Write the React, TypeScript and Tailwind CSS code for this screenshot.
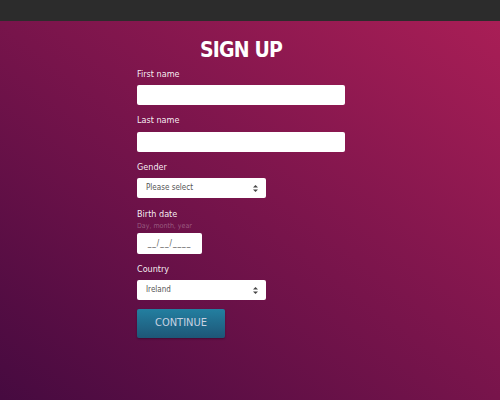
const font = "font-['DejaVu_Sans_Condensed','DejaVu_Sans',sans-serif]";

function Label({ children }: { children: string }) {
  return <div className="text-[9px] leading-[12px] text-white/95">{children}</div>;
}

function TextInput() {
  return <input type="text" className="block h-[20px] w-[208px] rounded-[2px] bg-white outline-none" />;
}

function FakeSelect({ value }: { value: string }) {
  return (
    <div className="flex h-[20px] w-[129px] items-center justify-between rounded-[2px] bg-white pl-[9px] pr-[8px] text-[8px] text-[#555]">
      <span>{value}</span>
      <svg width="5" height="7" viewBox="0 0 5 7" className="fill-[#444]">
        <path d="M2.5 0 L5 2.6 H0 Z" />
        <path d="M2.5 7 L5 4.4 H0 Z" />
      </svg>
    </div>
  );
}

export default function App() {
  return (
    <div className={`h-[400px] w-[500px] overflow-hidden ${font}`}>
      <div className="h-[21px] bg-[#2c2c2c]" />
      <div className="h-[379px] bg-[linear-gradient(to_top_right,#460a40,#a91e56)] pt-[18px]">
        <form className="ml-[137px] w-[208px]">
          <h1 className="text-center text-[21px] font-bold leading-[22px] tracking-[-0.8px] text-white">SIGN UP</h1>

          <div className="mt-[7px]">
            <Label>First name</Label>
            <div className="mt-[5px]"><TextInput /></div>
          </div>

          <div className="mt-[9px]">
            <Label>Last name</Label>
            <div className="mt-[6px]"><TextInput /></div>
          </div>

          <div className="mt-[9px]">
            <Label>Gender</Label>
            <div className="mt-[5px]"><FakeSelect value="Please select" /></div>
          </div>

          <div className="mt-[10px]">
            <Label>Birth date</Label>
            <div className="mt-[1px] text-[7px] leading-[10px] text-white/30">Day, month, year</div>
            <div className="mt-[2px] flex h-[21px] w-[65px] items-center justify-center rounded-[2px] bg-white text-[8px] tracking-[1px] text-[#555]">
              __/__/____
            </div>
          </div>

          <div className="mt-[9px]">
            <Label>Country</Label>
            <div className="mt-[5px]"><FakeSelect value="Ireland" /></div>
          </div>

          <button
            type="button"
            className="mt-[9px] h-[29px] w-[88px] rounded-[2px] bg-[linear-gradient(to_bottom,#237fa0,#1e5677)] text-[11px] text-[#c9d2e2] shadow-[0_1px_2px_rgba(0,0,0,0.3)]"
          >
            CONTINUE
          </button>
        </form>
      </div>
    </div>
  );
}
